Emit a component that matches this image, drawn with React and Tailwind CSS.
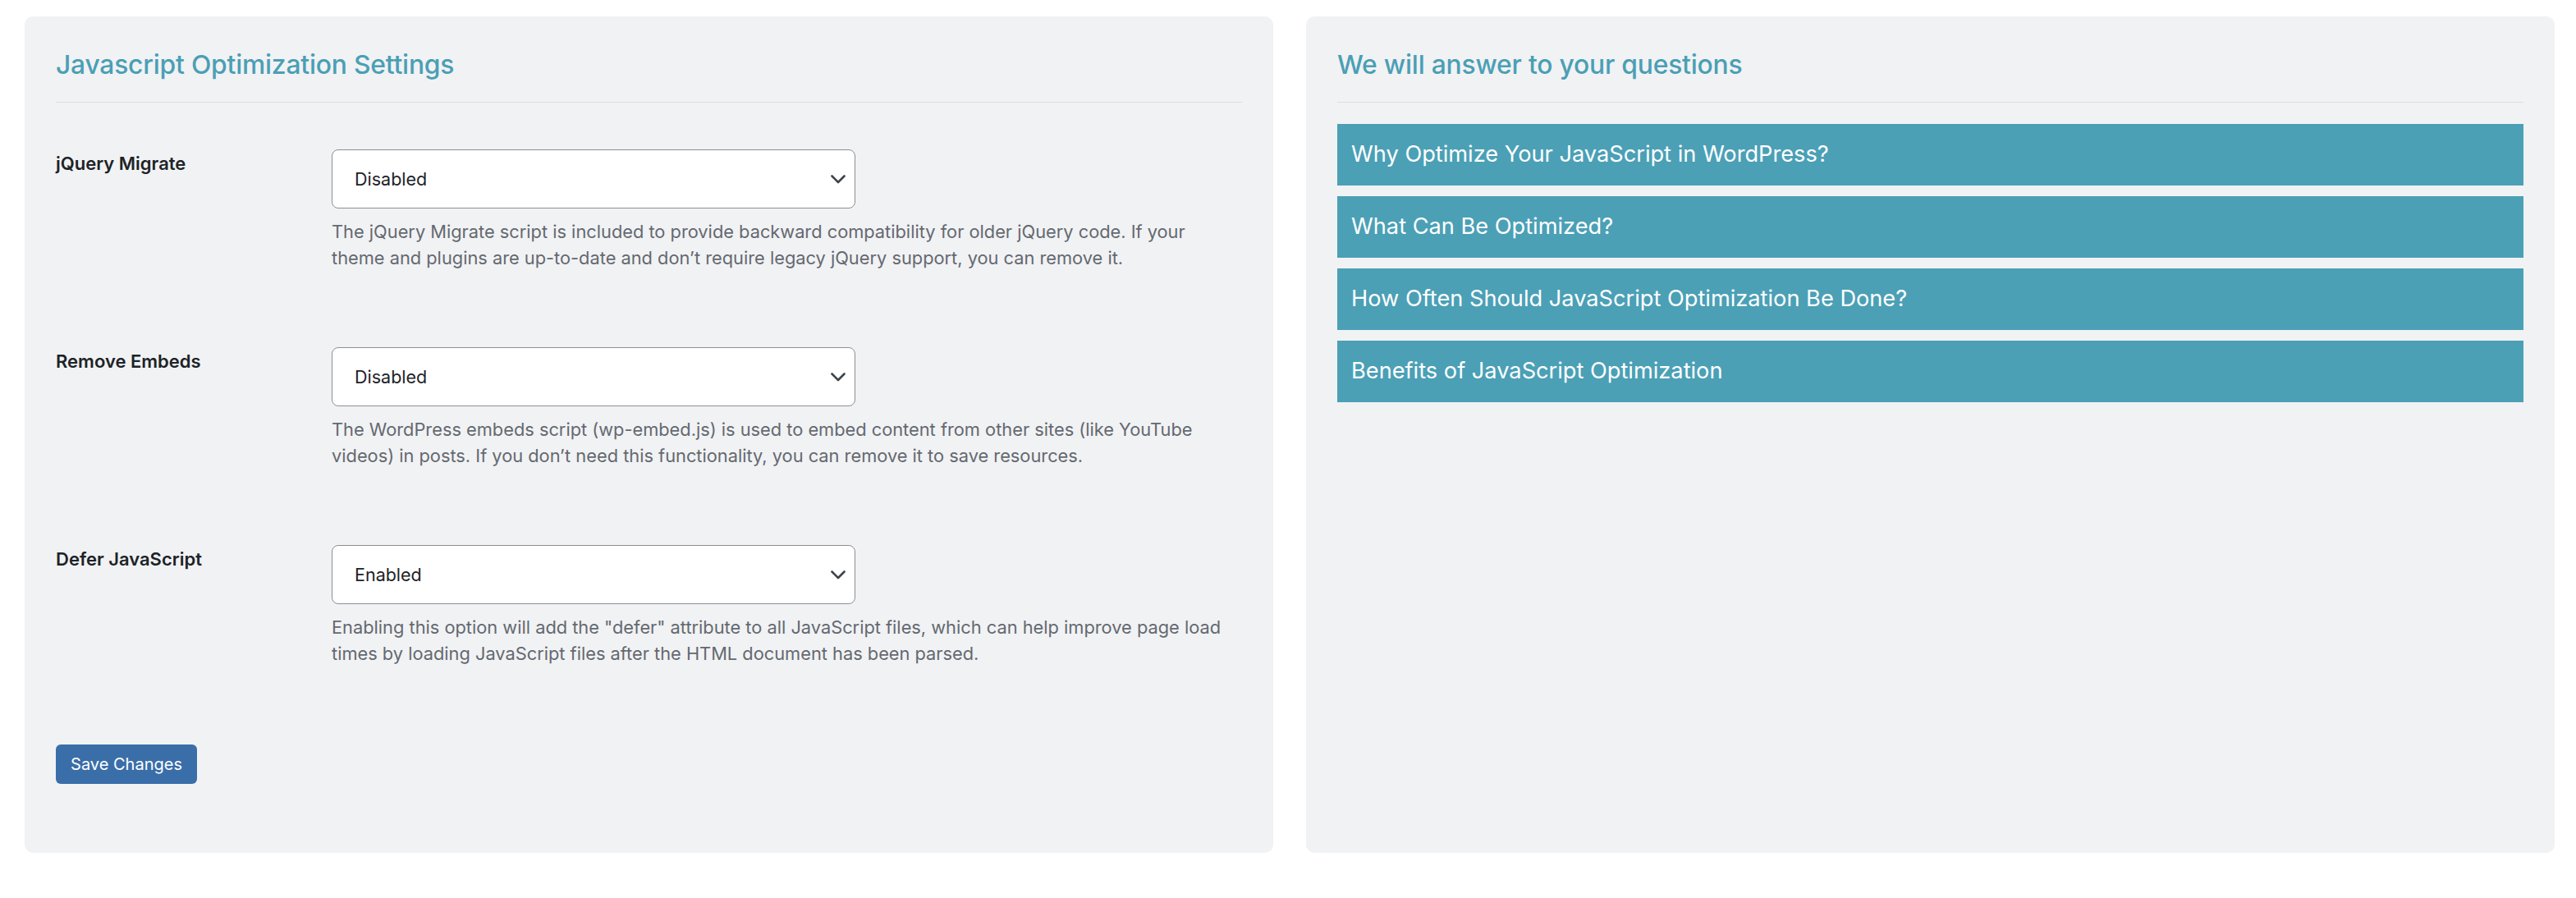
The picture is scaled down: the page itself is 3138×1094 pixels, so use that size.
import React from "react";

const rows = [
  {
    label: "jQuery Migrate",
    value: "Disabled",
    desc: [
      "The jQuery Migrate script is included to provide backward compatibility for older jQuery code. If your",
      "theme and plugins are up-to-date and don’t require legacy jQuery support, you can remove it.",
    ],
  },
  {
    label: "Remove Embeds",
    value: "Disabled",
    desc: [
      "The WordPress embeds script (wp-embed.js) is used to embed content from other sites (like YouTube",
      "videos) in posts. If you don’t need this functionality, you can remove it to save resources.",
    ],
  },
  {
    label: "Defer JavaScript",
    value: "Enabled",
    desc: [
      "Enabling this option will add the \"defer\" attribute to all JavaScript files, which can help improve page load",
      "times by loading JavaScript files after the HTML document has been parsed.",
    ],
  },
];

const faqs = [
  "Why Optimize Your JavaScript in WordPress?",
  "What Can Be Optimized?",
  "How Often Should JavaScript Optimization Be Done?",
  "Benefits of JavaScript Optimization",
];

function Heading({ children }) {
  return (
    <div>
      <h2 className="text-[31.8px] leading-[40px] font-medium text-[#4a9fb5] tracking-[-0.2px]">{children}</h2>
      <div className="mt-[25px] h-px bg-[#dcdde0]" />
    </div>
  );
}

function Select({ value }) {
  return (
    <div className="h-[72px] w-[638px] rounded-[8px] border border-[#8c8f94] bg-white flex items-center justify-between pl-[27px] pr-[11px]">
      <span className="text-[21.5px] text-[#1d2327]">{value}</span>
      <svg width="18" height="11" viewBox="0 0 18 11" fill="none">
        <path d="M1.5 1.5 L9 9 L16.5 1.5" stroke="#3c434a" strokeWidth="2.6" strokeLinecap="round" strokeLinejoin="round" />
      </svg>
    </div>
  );
}

export default function App() {
  return (
    <div
      className="w-[3138px] h-[1094px] bg-white pt-[20px] pl-[30px] pr-[26px]"
      style={{ fontFamily: "Inter, 'Noto Sans', 'Liberation Sans', sans-serif" }}
    >
      <div className="grid grid-cols-2 gap-[40px] items-stretch">
        <div className="rounded-[10px] bg-[#f1f2f4] px-[38px] pt-[39px] pb-[84px]">
          <Heading>Javascript Optimization Settings</Heading>
          <div className="mt-[57px] flex flex-col gap-[93px]">
            {rows.map((r) => (
              <div key={r.label} className="flex">
                <div className="w-[336px] shrink-0 text-[22px] leading-[34px] font-semibold text-[#1d2327]">
                  {r.label}
                </div>
                <div className="flex-1">
                  <Select value={r.value} />
                  <div className="mt-[12px] text-[21.8px] leading-[32px] text-[#646970]">
                    {r.desc.map((l, i) => (
                      <div key={i} className="whitespace-nowrap">{l}</div>
                    ))}
                  </div>
                </div>
              </div>
            ))}
          </div>
          <button className="mt-[95px] h-[48px] w-[172px] rounded-[6px] bg-[#3a6ea9] text-white text-[20px] flex items-center justify-center">
            Save Changes
          </button>
        </div>
        <div className="rounded-[10px] bg-[#f1f2f4] px-[38px] pt-[39px]">
          <Heading>We will answer to your questions</Heading>
          <div className="mt-[26px] flex flex-col gap-[13px]">
            {faqs.map((f) => (
              <div key={f} className="h-[75px] bg-[#4ba0b6] flex items-center px-[17px] text-white text-[27.2px]">
                {f}
              </div>
            ))}
          </div>
        </div>
      </div>
    </div>
  );
}
